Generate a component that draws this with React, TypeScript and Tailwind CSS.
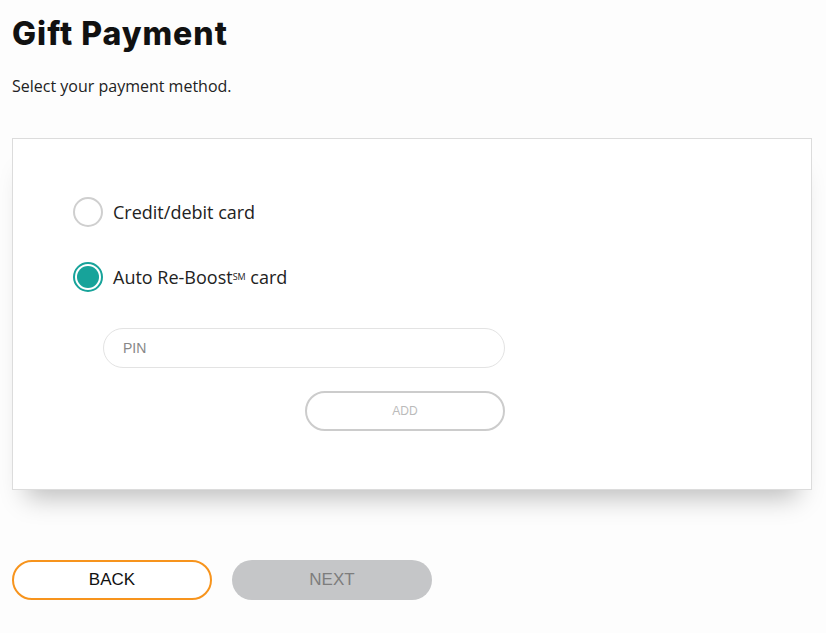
export default function App() {
  return (
    <div className="min-h-[633px] bg-[#fdfdfd] px-3 pt-[14px] font-['Open_Sans',sans-serif] text-[#222]">
      <h1 className="font-['Inter',sans-serif] text-[32px] font-extrabold leading-[40px] tracking-[1px] text-[#111]">
        Gift Payment
      </h1>
      <p className="mt-[21px] text-[16px] leading-[22px] text-[#222]">Select your payment method.</p>

      <div className="mt-[41px] w-[800px] border border-[#dcdcdc] bg-white pl-[60px] pt-[58px] pb-[58px] shadow-[0_22px_24px_-14px_rgba(0,0,0,0.25)]">
        <label className="flex items-center gap-[10px]">
          <span className="h-[30px] w-[30px] rounded-full border-2 border-[#cfcfcf] bg-white" />
          <span className="text-[18px] leading-[24px] text-[#222]">Credit/debit card</span>
        </label>
        <label className="mt-[35px] flex items-center gap-[10px]">
          <span className="flex h-[30px] w-[30px] items-center justify-center rounded-full border-2 border-[#17a39a] bg-white">
            <span className="h-[22px] w-[22px] rounded-full bg-[#17a39a]" />
          </span>
          <span className="text-[18px] leading-[24px] text-[#222]">
            Auto Re-Boost<sup className="text-[9px]">SM</sup> card
          </span>
        </label>

        <div className="ml-[30px] mt-[36px] flex w-[402px] flex-col items-end gap-[23px]">
          <input
            placeholder="PIN"
            className="h-[40px] w-full rounded-full border border-[#e3e3e3] bg-white px-[19px] font-['Liberation_Sans',sans-serif] text-[14px] text-[#555] placeholder:text-[#888] outline-none"
          />
          <button className="h-[40px] w-[200px] rounded-full border-2 border-[#cccccc] bg-white font-['Liberation_Sans',sans-serif] text-[12px] text-[#bbbbbb]">
            ADD
          </button>
        </div>
      </div>

      <div className="mt-[70px] flex gap-[20px]">
        <button className="h-[40px] w-[200px] rounded-full border-2 border-[#f7941d] bg-white font-['Liberation_Sans',sans-serif] text-[17px] text-[#111]">
          BACK
        </button>
        <button className="h-[40px] w-[200px] rounded-full bg-[#c5c6c8] font-['Liberation_Sans',sans-serif] text-[17px] text-[#7d7d7d]">
          NEXT
        </button>
      </div>
    </div>
  );
}
